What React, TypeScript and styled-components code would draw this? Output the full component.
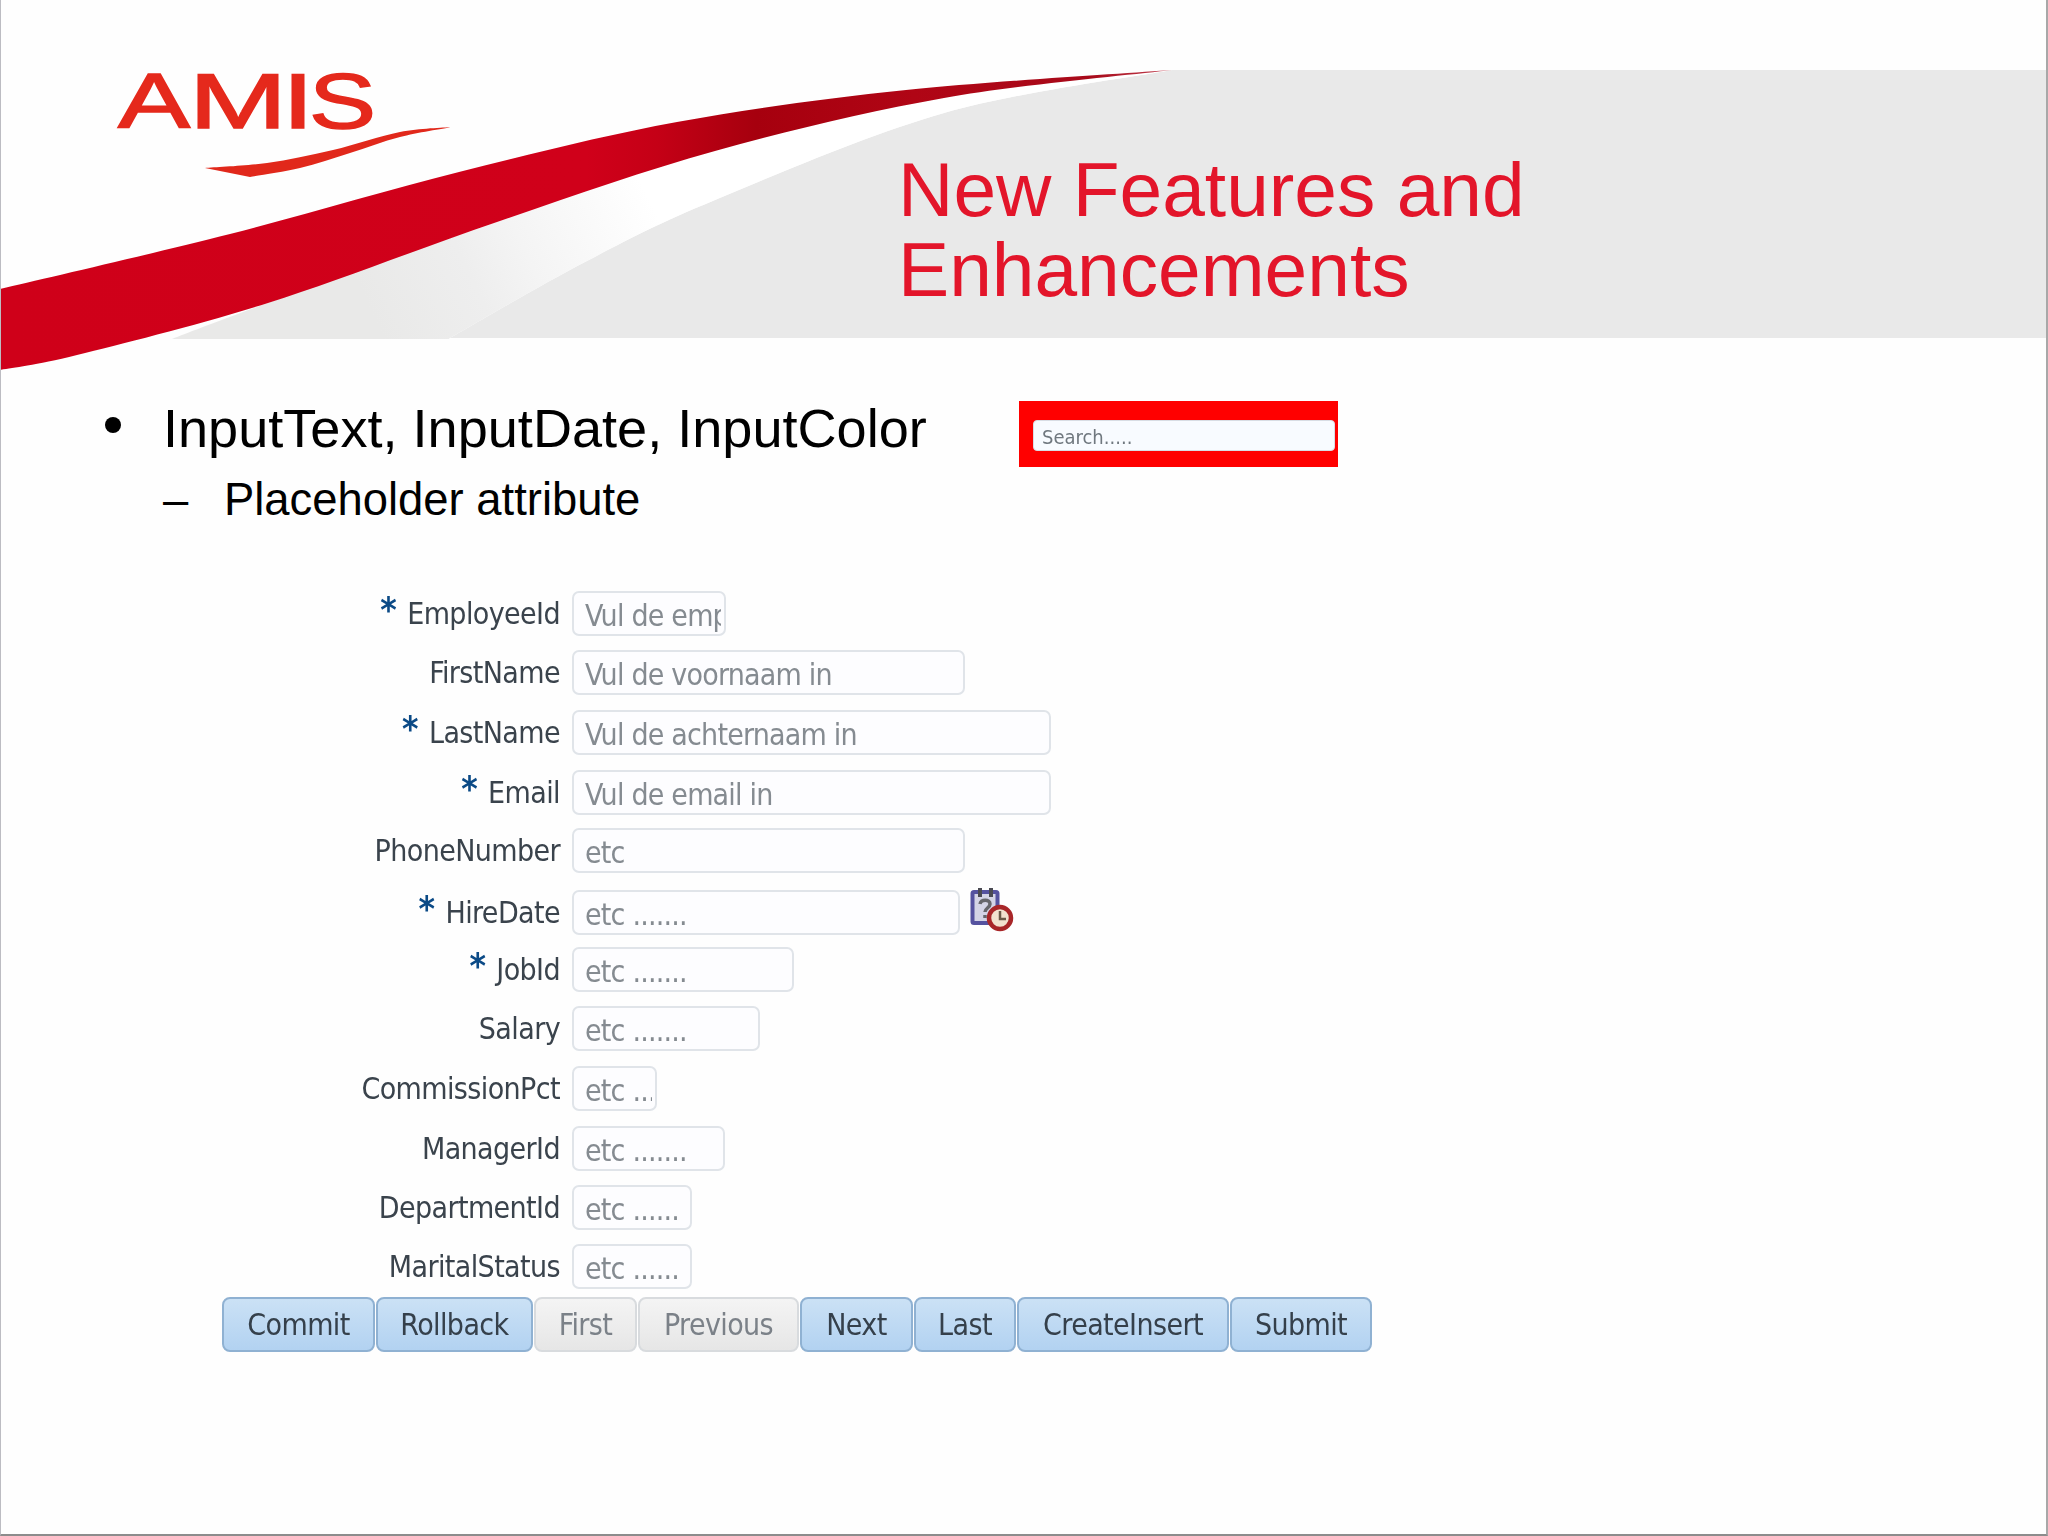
import React from "react";
import styled, { createGlobalStyle } from "styled-components";

const Global = createGlobalStyle`
  html, body { margin: 0; padding: 0; background: #fff; }
`;

const Slide = styled.div`
  position: relative;
  width: 2048px;
  height: 1536px;
  box-sizing: border-box;
  overflow: hidden;
  background: #fefefe;
  border-left: 1px solid #bcbcc2;
  border-right: 2px solid #a8a8a8;
  border-bottom: 2px solid #8c8c8c;
  font-family: "Liberation Sans", Arial, sans-serif;
  color: #000;
`;

const Header = styled.header`
  position: relative;
  height: 339px;
  box-sizing: border-box;
  padding: 150px 0 0 897px;
`;

const HeaderArt = styled.svg`
  position: absolute;
  left: -1px;
  top: 0;
  display: block;
`;

const Title = styled.h1`
  position: relative;
  margin: 0;
  font-size: 76.7px;
  line-height: 80px;
  font-weight: 400;
  color: #e3152a;
`;

const Main = styled.main`
  padding-top: 58px;
`;

const BulletRow = styled.div`
  display: flex;
  align-items: flex-start;
  height: 62px;
  padding-left: 104px;
`;

const Dot = styled.span`
  flex: none;
  width: 16px;
  height: 16px;
  margin: 20px 42px 0 0;
  border-radius: 50%;
  background: #000;
`;

const BulletText = styled.div`
  flex: none;
  width: 856px;
  font-size: 54.1px;
  line-height: 62px;
`;

const SearchBanner = styled.div`
  flex: none;
  width: 319px;
  height: 66px;
  margin-top: 4px;
  box-sizing: border-box;
  padding: 19px 3px 16px 14px;
  background: #ff0000;
`;

const SearchInput = styled.input`
  display: block;
  width: 100%;
  height: 100%;
  box-sizing: border-box;
  padding: 3px 8px 0;
  border: 1px solid #d8dde4;
  border-radius: 4px;
  background: #f8fbff;
  font-family: "DejaVu Sans Condensed", "DejaVu Sans", sans-serif;
  font-size: 20px;
  outline: none;
  filter: blur(0.7px);
  &::placeholder { color: #70787f; opacity: 1; }
`;

const SubRow = styled.div`
  display: flex;
  margin-top: 15px;
  padding-left: 162px;
  font-size: 45.4px;
  line-height: 52px;
`;

const Dash = styled.span`
  flex: none;
  width: 61px;
`;

const Form = styled.form`
  margin: 66px 0 0;
  padding-left: 221px;
  font-family: "DejaVu Sans Condensed", "DejaVu Sans", sans-serif;
  filter: blur(0.6px);
`;

const FormRow = styled.div<{ $pitch: number }>`
  display: flex;
  align-items: flex-start;
  height: ${(p) => p.$pitch}px;
`;

const Label = styled.label`
  flex: none;
  width: 338px;
  height: 44px;
  margin-top: -1px;
  display: flex;
  justify-content: flex-end;
  align-items: center;
  font-size: 30px;
  letter-spacing: -0.6px;
  color: #3a434c;
`;

const Required = styled.span`
  margin: -6px 11px 0 0;
  font-size: 35px;
  font-weight: 700;
  line-height: 32px;
  color: #0b4a86;
`;

const Field = styled.input<{ $w: number }>`
  flex: none;
  width: ${(p) => p.$w}px;
  height: 45px;
  margin: -1px 0 0 12px;
  box-sizing: border-box;
  padding: 4px 3px 0 11px;
  border: 2px solid #e0e4e9;
  border-radius: 7px;
  background: #fdfdff;
  font-family: inherit;
  font-size: 30px;
  letter-spacing: -0.8px;
  outline: none;
  &::placeholder { color: #858b91; opacity: 1; }
`;

const PickerIcon = styled.svg`
  flex: none;
  margin: -3px 0 0 10px;
`;

const Toolbar = styled.div`
  display: flex;
  gap: 1px;
  margin-top: -5px;
`;

const ToolButton = styled.button<{ $w: number; $off?: boolean }>`
  flex: none;
  width: ${(p) => p.$w}px;
  height: 55px;
  padding: 0;
  box-sizing: border-box;
  border-radius: 8px;
  border: 2px solid ${(p) => (p.$off ? "#d8dbde" : "#8fb1d2")};
  background: ${(p) =>
    p.$off
      ? "linear-gradient(#f4f4f4, #e6e6e6)"
      : "linear-gradient(#cbe1f5, #b2d2f1)"};
  color: ${(p) => (p.$off ? "#7b8188" : "#35404b")};
  font-family: inherit;
  font-size: 30px;
  letter-spacing: -0.6px;
`;

const rows = [
  { label: "EmployeeId", req: true, w: 154, ph: "Vul de employeeId in", pitch: 59 },
  { label: "FirstName", w: 393, ph: "Vul de voornaam in", pitch: 60 },
  { label: "LastName", req: true, w: 479, ph: "Vul de achternaam in", pitch: 60 },
  { label: "Email", req: true, w: 479, ph: "Vul de email in", pitch: 58 },
  { label: "PhoneNumber", w: 393, ph: "etc", pitch: 62 },
  { label: "HireDate", req: true, w: 388, ph: "etc .......", pitch: 57, picker: true },
  { label: "JobId", req: true, w: 222, ph: "etc .......", pitch: 59 },
  { label: "Salary", w: 188, ph: "etc .......", pitch: 60 },
  { label: "CommissionPct", w: 85, ph: "etc .......", pitch: 60 },
  { label: "ManagerId", w: 153, ph: "etc .......", pitch: 59 },
  { label: "DepartmentId", w: 120, ph: "etc ......", pitch: 59 },
  { label: "MaritalStatus", w: 120, ph: "etc ......", pitch: 57 },
];

const buttons = [
  { t: "Commit", w: 153 },
  { t: "Rollback", w: 157 },
  { t: "First", w: 103, off: true },
  { t: "Previous", w: 161, off: true },
  { t: "Next", w: 113 },
  { t: "Last", w: 102 },
  { t: "CreateInsert", w: 212 },
  { t: "Submit", w: 142 },
];

type Pt = [number, number];

// Catmull-Rom through the points, as cubic segments; the first point is not emitted.
const spline = (p: Pt[]) => {
  let d = "";
  for (let i = 0; i < p.length - 1; i++) {
    const a = p[Math.max(i - 1, 0)];
    const b = p[i];
    const c = p[i + 1];
    const e = p[Math.min(i + 2, p.length - 1)];
    d += ` C${b[0] + (c[0] - a[0]) / 6} ${b[1] + (c[1] - a[1]) / 6} ${c[0] - (e[0] - b[0]) / 6} ${c[1] - (e[1] - b[1]) / 6} ${c[0]} ${c[1]}`;
  }
  return d;
};

const redTop: Pt[] = [[0, 289], [230, 234], [459, 172], [677, 122], [906, 90], [1172, 70]];
const redBottom: Pt[] = [[1172, 70], [944, 98], [715, 151], [497, 222], [268, 303], [77, 355], [0, 370]];
const bandEdge: Pt[] = [[1172, 70], [944, 113], [715, 200], [585, 262], [448, 339]];
const wedgeEdge: Pt[] = [[172, 339], [268, 303], [497, 222], [715, 151], [944, 98], [1172, 70]];
const markTop: Pt[] = [[452, 127], [400, 132], [333, 150], [267, 163], [205, 168]];
const markBottom: Pt[] = [[250, 177], [300, 168], [350, 153], [400, 137], [452, 127]];

const letters = [
  { c: "A", x: 118, len: 72 },
  { c: "M", x: 189, len: 98 },
  { c: "I", x: 282, len: 32 },
  { c: "S", x: 309, len: 67 },
];

const Swoosh = () => (
  <HeaderArt width={2048} height={380} viewBox="0 0 2048 380">
    <defs>
      <linearGradient id="wedge" x1="380" y1="330" x2="650" y2="200" gradientUnits="userSpaceOnUse">
        <stop offset="0" stopColor="#e9e9e8" />
        <stop offset="0.35" stopColor="#eeeeee" />
        <stop offset="0.55" stopColor="#f4f4f4" />
        <stop offset="1" stopColor="#ffffff" />
      </linearGradient>
      <linearGradient id="red" x1="0" y1="0" x2="1172" y2="0" gradientUnits="userSpaceOnUse">
        <stop offset="0" stopColor="#cf0019" />
        <stop offset="0.5" stopColor="#d0001a" />
        <stop offset="0.56" stopColor="#c50016" />
        <stop offset="0.645" stopColor="#a6000e" />
        <stop offset="0.78" stopColor="#b00515" />
        <stop offset="0.93" stopColor="#a80a1a" />
        <stop offset="1" stopColor="#c04050" />
      </linearGradient>
    </defs>
    <path d={`M1172 70 H2049 V338 H448 L448 339 ${spline([...bandEdge].reverse())} Z`} fill="#e9e9e9" />
    <path d={`M172 339 ${spline(wedgeEdge)} ${spline(bandEdge)} Z`} fill="url(#wedge)" />
    <path d={`M0 289 ${spline(redTop)} ${spline(redBottom)} Z`} fill="url(#red)" />
    {letters.map((l) => (
      <text
        key={l.c}
        x={l.x}
        y={128}
        fontFamily="'Liberation Sans', Arial, sans-serif"
        fontSize={77}
        textLength={l.len}
        lengthAdjust="spacingAndGlyphs"
        fill="#e5291c"
        stroke="#e5291c"
        strokeWidth={1.5}
      >
        {l.c}
      </text>
    ))}
    <path d={`M452 127 ${spline(markTop)} L250 177 ${spline(markBottom)} Z`} fill="#e1281b" />
  </HeaderArt>
);

const CalendarClock = () => (
  <PickerIcon width="44" height="44" viewBox="0 0 44 44">
    <rect x="2.5" y="4" width="25" height="31" rx="1.5" fill="#d4d4e6" stroke="#55529f" strokeWidth="4" />
    <rect x="8" y="0" width="4" height="9" fill="#4a4a52" />
    <rect x="19" y="0" width="4" height="9" fill="#4a4a52" />
    <path d="M10 16 C11 11 20 11 20 16 C20 20 15 20 15 24 M15 27 V30" fill="none" stroke="#66666b" strokeWidth="3.5" />
    <circle cx="30" cy="30" r="11" fill="#f2e2cf" stroke="#a82628" strokeWidth="4.5" />
    <path d="M30 23 V31 H36" fill="none" stroke="#6b5a48" strokeWidth="2.5" />
  </PickerIcon>
);

export default function App() {
  return (
    <Slide>
      <Global />
      <Header>
        <Swoosh />
        <Title>
          New Features and
          <br />
          Enhancements
        </Title>
      </Header>
      <Main>
        <BulletRow>
          <Dot />
          <BulletText>InputText, InputDate, InputColor</BulletText>
          <SearchBanner>
            <SearchInput placeholder="Search....." readOnly />
          </SearchBanner>
        </BulletRow>
        <SubRow>
          <Dash>–</Dash>
          <span>Placeholder attribute</span>
        </SubRow>
        <Form>
          {rows.map((r) => (
            <FormRow key={r.label} $pitch={r.pitch}>
              <Label>
                {r.req && <Required>*</Required>}
                {r.label}
              </Label>
              <Field $w={r.w} placeholder={r.ph} readOnly />
              {r.picker && <CalendarClock />}
            </FormRow>
          ))}
          <Toolbar>
            {buttons.map((b) => (
              <ToolButton key={b.t} type="button" $w={b.w} $off={b.off}>
                {b.t}
              </ToolButton>
            ))}
          </Toolbar>
        </Form>
      </Main>
    </Slide>
  );
}
